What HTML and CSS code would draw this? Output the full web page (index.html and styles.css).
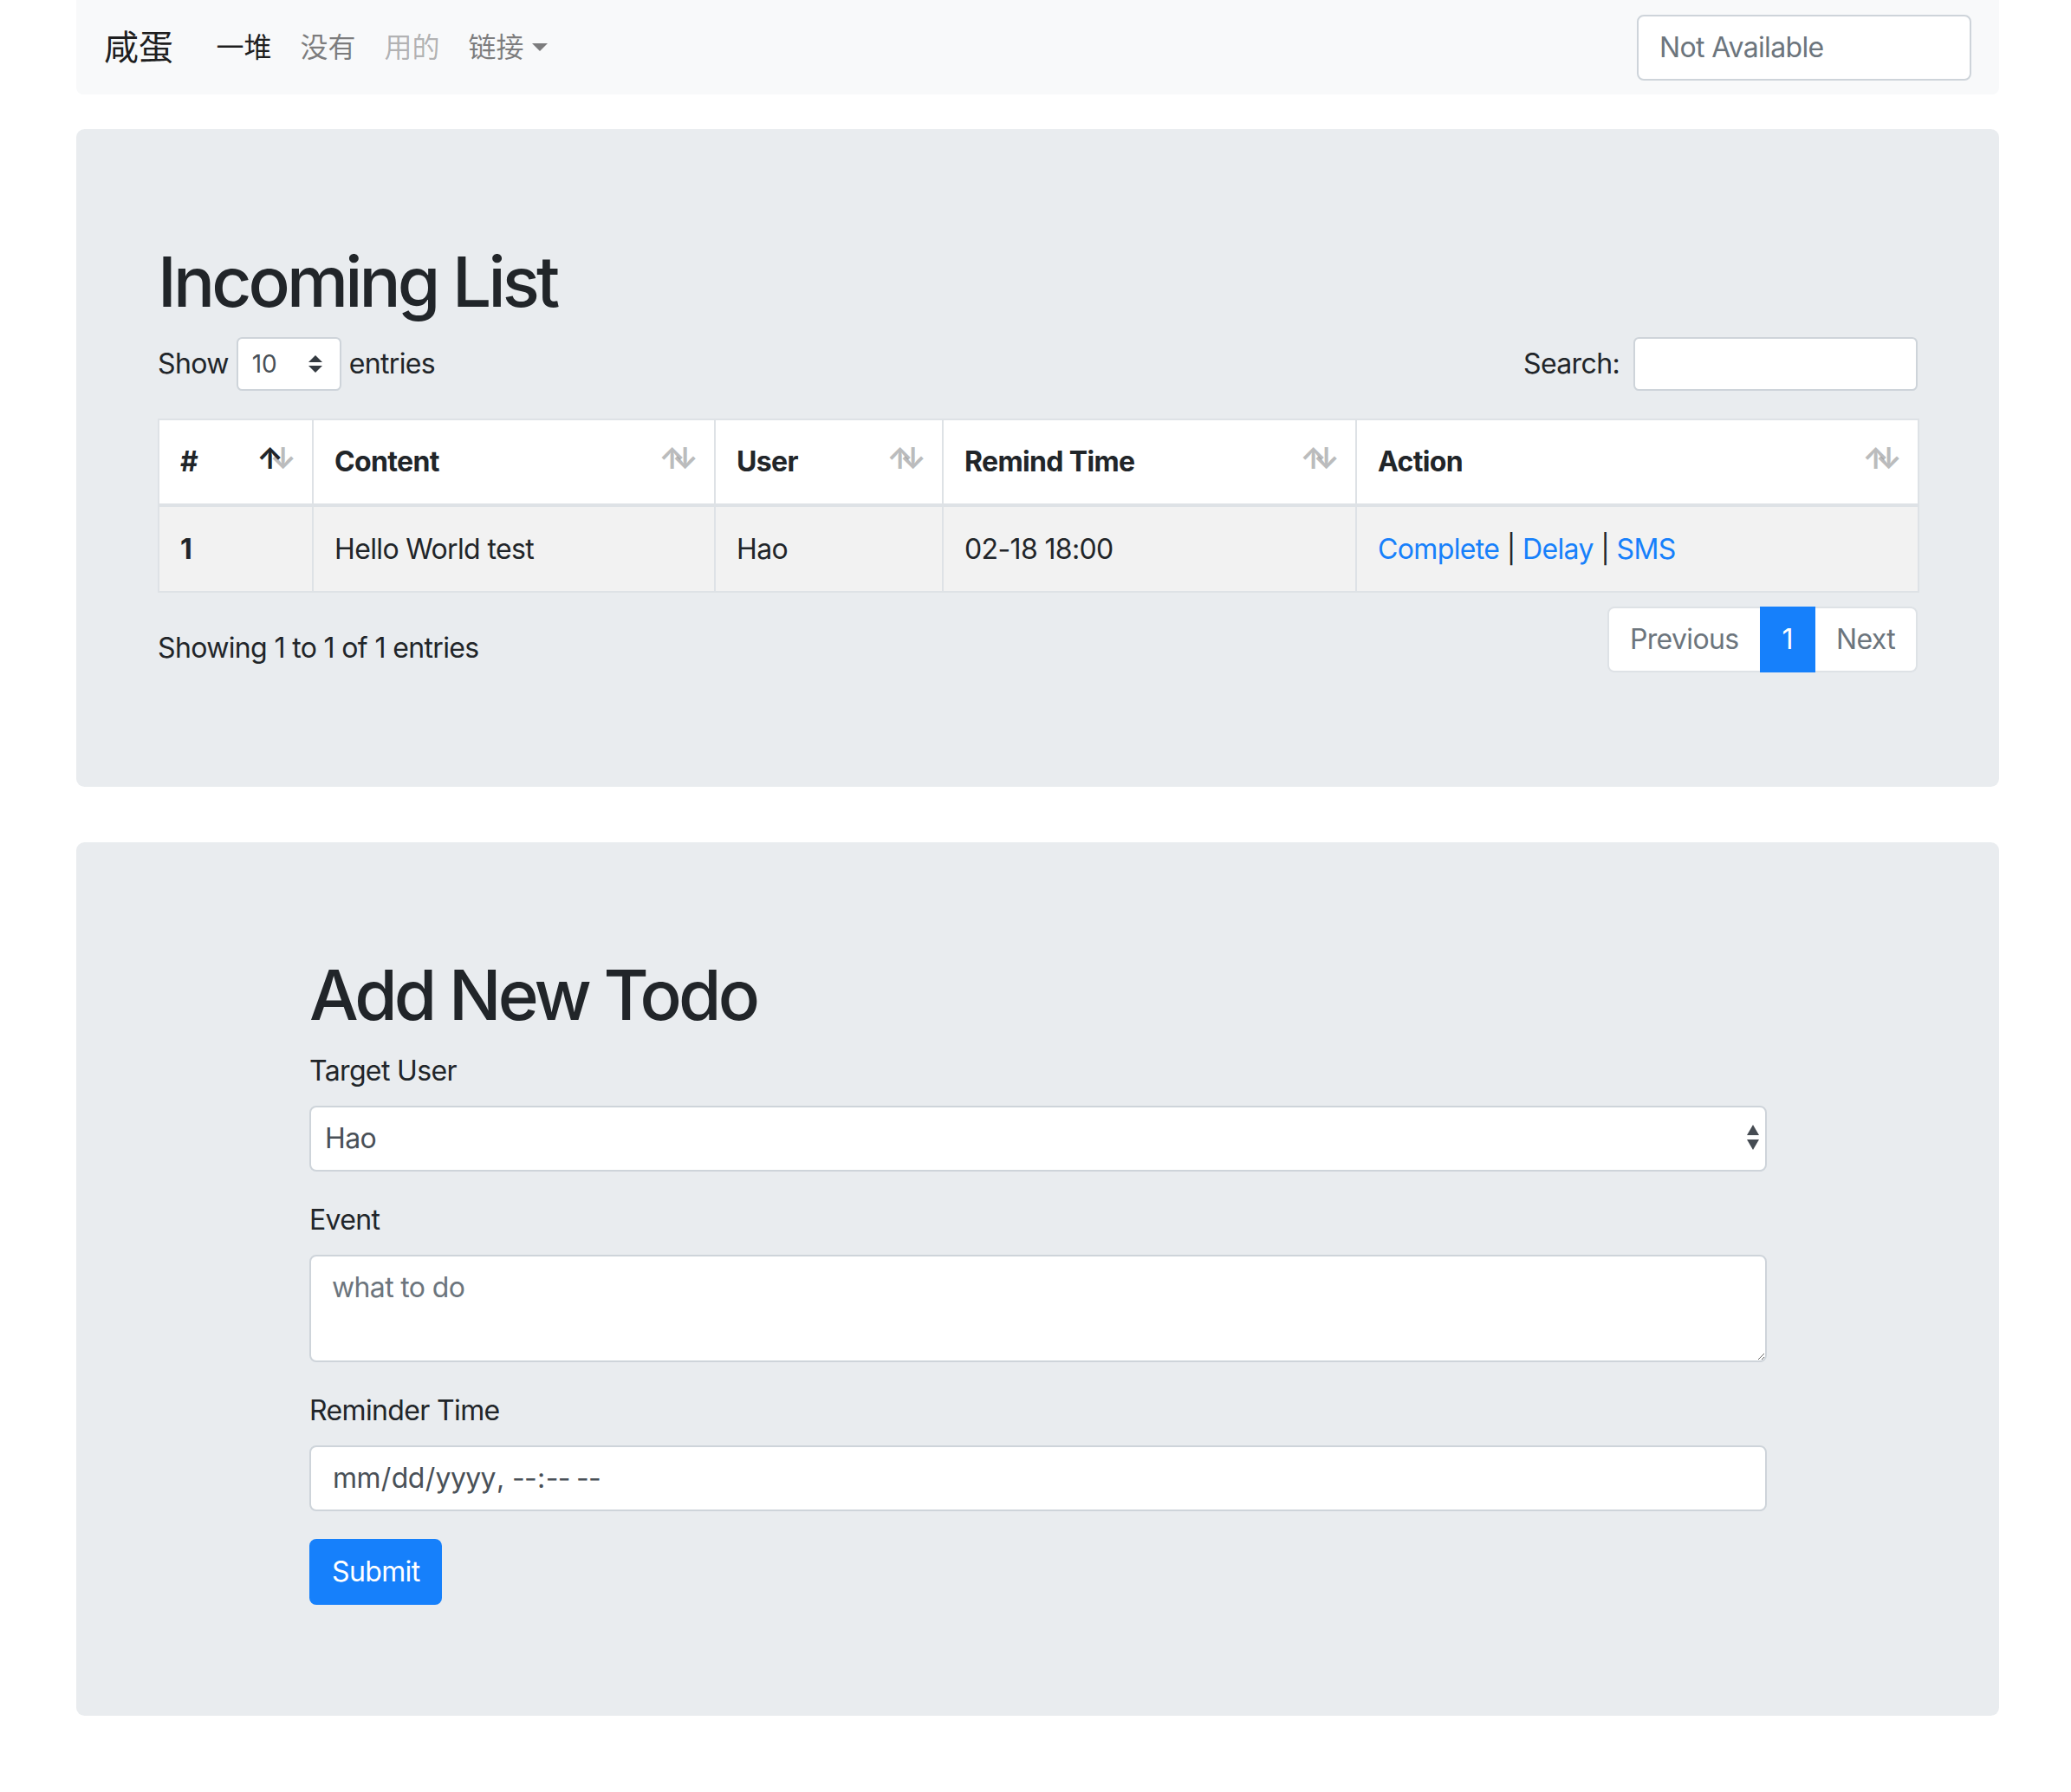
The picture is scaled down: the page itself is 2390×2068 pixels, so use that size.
FILE: index.html
```html
<!DOCTYPE html>
<html lang="zh">
<head>
<meta charset="utf-8">
<title>Incoming List</title>
<link rel="stylesheet" href="styles.css">
</head>
<body>
<div class="page">
  <nav class="navbar">
    <a class="brand" href="#">咸蛋</a>
    <ul class="nav">
      <li><a class="nav-link active" href="#">一堆</a></li>
      <li><a class="nav-link" href="#">没有</a></li>
      <li><a class="nav-link disabled" href="#">用的</a></li>
      <li><a class="nav-link dropdown" href="#">链接</a></li>
    </ul>
    <form class="nav-form">
      <input class="nav-input" type="text" placeholder="Not Available">
    </form>
  </nav>

  <section class="jumbotron">
    <h1 class="title">Incoming List</h1>
    <div class="dt-top">
      <label class="dt-length">Show <span class="select-wrap"><select class="select-sm"><option>10</option><option>25</option><option>50</option></select><svg class="sm-arrows" viewBox="0 0 4 5" width="16" height="20"><path d="M2 0L0 2h4zm0 5L0 3h4z" fill="#343a40"/></svg></span> entries</label>
      <label class="dt-search">Search:<input class="search-input" type="search"></label>
    </div>
    <table class="dt-table">
      <thead>
        <tr>
          <th class="c1 sort asc">#</th>
          <th class="c2 sort">Content</th>
          <th class="c3 sort">User</th>
          <th class="c4 sort">Remind Time</th>
          <th class="c5 sort">Action</th>
        </tr>
      </thead>
      <tbody>
        <tr>
          <th class="rowhead">1</th>
          <td>Hello World test</td>
          <td>Hao</td>
          <td>02-18 18:00</td>
          <td><a class="link" href="#">Complete</a> | <a class="link" href="#">Delay</a> | <a class="link" href="#">SMS</a></td>
        </tr>
      </tbody>
    </table>
    <div class="dt-bottom">
      <div class="dt-info">Showing 1 to 1 of 1 entries</div>
      <ul class="pagination">
        <li class="page-item disabled"><a class="page-link first" href="#">Previous</a></li>
        <li class="page-item active"><a class="page-link" href="#">1</a></li>
        <li class="page-item disabled"><a class="page-link last" href="#">Next</a></li>
      </ul>
    </div>
  </section>

  <section class="jumbotron">
    <div class="todo-form">
      <h1 class="title">Add New Todo</h1>
      <form>
        <div class="form-group">
          <label class="form-label" for="user">Target User</label>
          <div class="select-wrap block">
            <select id="user" class="form-control form-select"><option>Hao</option></select>
            <svg class="lg-arrows" viewBox="0 0 14 29" width="14" height="29"><path d="M0 12L7 0L14 12Z M0 17L14 17L7 29Z" fill="#454b52"/></svg>
          </div>
        </div>
        <div class="form-group">
          <label class="form-label" for="event">Event</label>
          <textarea id="event" class="form-control textarea" rows="2" placeholder="what to do"></textarea>
        </div>
        <div class="form-group">
          <label class="form-label" for="time">Reminder Time</label>
          <input id="time" class="form-control date-input" type="datetime-local">
        </div>
        <button class="btn-submit" type="submit">Submit</button>
      </form>
    </div>
  </section>
</div>
</body>
</html>
```

FILE: styles.css
```css
* { box-sizing: border-box; }

html, body {
  margin: 0;
  padding: 0;
  background: #ffffff;
}

body {
  font-family: Inter, "Noto Sans CJK SC", sans-serif;
  font-size: 32px;
  line-height: 48px;
  color: #212529;
  letter-spacing: -0.02em;
}

.page {
  padding: 0 83px 0 88px;
}

/* ---------- navbar ---------- */
.navbar {
  display: flex;
  align-items: center;
  height: 109px;
  padding: 16px 32px;
  background: #f8f9fa;
  border-radius: 0 0 8px 8px;
}

.brand {
  font-size: 40px;
  line-height: 48px;
  color: rgba(0, 0, 0, 0.9);
  text-decoration: none;
  margin-right: 33px;
  letter-spacing: 0;
}

.nav {
  display: flex;
  list-style: none;
  margin: 0;
  padding: 0;
}

.nav-link {
  display: block;
  padding: 14px 16.5px;
  font-size: 32px;
  line-height: 48px;
  color: rgba(0, 0, 0, 0.5);
  text-decoration: none;
  letter-spacing: 0;
}

.nav-link.active { color: rgba(0, 0, 0, 0.9); }
.nav-link.disabled { color: rgba(0, 0, 0, 0.3); }

.nav-link.dropdown::after {
  content: "";
  display: inline-block;
  margin-left: 9px;
  vertical-align: 7px;
  border-top: 9.6px solid;
  border-left: 9.6px solid transparent;
  border-right: 9.6px solid transparent;
}

.nav-form {
  margin-left: auto;
}

.nav-input {
  width: 386px;
  height: 76px;
  padding: 12px 24px;
  font-family: inherit;
  font-size: 32px;
  letter-spacing: -0.02em;
  color: #495057;
  background: #fff;
  border: 2px solid #ced4da;
  border-radius: 8px;
  outline: none;
}

.nav-input::placeholder,
.form-control::placeholder { color: #6c757d; opacity: 1; }

/* ---------- jumbotron ---------- */
.jumbotron {
  background: #e9ecef;
  border-radius: 9.6px;
  padding: 128px 94px;
  margin-top: 40px;
}

.jumbotron + .jumbotron {
  margin-top: 64px;
}

.title {
  margin: 0 0 16px;
  font-size: 80px;
  line-height: 96px;
  font-weight: 500;
  letter-spacing: -0.048em;
}

/* ---------- datatable top ---------- */
.dt-top {
  display: flex;
  justify-content: space-between;
  align-items: center;
  height: 62px;
}

.dt-length, .dt-search {
  display: flex;
  align-items: center;
  white-space: nowrap;
}

.select-wrap {
  position: relative;
  display: inline-block;
  margin: 0 9px;
}

.select-wrap.block {
  display: block;
  margin: 0;
}

.select-sm {
  appearance: none;
  -webkit-appearance: none;
  width: 121px;
  height: 62px;
  padding: 8px 16px;
  font-family: inherit;
  font-size: 28px;
  color: #495057;
  background: #fff;
  border: 2px solid #ced4da;
  border-radius: 6.4px;
  outline: none;
  display: block;
}

.sm-arrows {
  position: absolute;
  right: 22px;
  top: 21px;
  pointer-events: none;
}

.search-input {
  width: 328px;
  height: 62px;
  margin-left: 16px;
  padding: 8px 16px;
  font-family: inherit;
  font-size: 28px;
  color: #495057;
  background: #fff;
  border: 2px solid #ced4da;
  border-radius: 6.4px;
  outline: none;
}

/* ---------- table ---------- */
.dt-table {
  width: 100%;
  table-layout: fixed;
  border-collapse: collapse;
  margin: 32px 0 12px;
  background: #fff;
}

.dt-table th,
.dt-table td {
  border: 2px solid #dee2e6;
  padding: 25px 24px 24px;
  text-align: left;
  vertical-align: top;
  font-size: 32px;
  line-height: 48px;
}

.dt-table thead th {
  position: relative;
  vertical-align: bottom;
  border-bottom-width: 4px;
  font-weight: 700;
  padding: 24px 60px 24px 24px;
}

.dt-table tbody tr { background: #f2f2f2; }

.dt-table .rowhead { font-weight: 700; }

.c1 { width: 178px; }
.c2 { width: 464px; }
.c3 { width: 263px; }
.c4 { width: 477px; }
.c5 { width: 649px; }

.sort::before,
.sort::after {
  position: absolute;
  bottom: 28px;
  display: block;
  opacity: 0.3;
  font-family: Inter, "DejaVu Sans", sans-serif;
  font-weight: 700;
  font-size: 34px;
  line-height: 48px;
  letter-spacing: 0;
}

.sort::before { content: "\2191"; right: 33px; }
.sort::after { content: "\2193"; right: 18px; }
.sort.asc::before { opacity: 1; }

.link {
  color: #1680fb;
  text-decoration: none;
}

/* ---------- datatable bottom ---------- */
.dt-bottom {
  display: flex;
  justify-content: space-between;
  align-items: flex-start;
}

.dt-info {
  padding-top: 28px;
  white-space: nowrap;
}

.pagination {
  display: flex;
  list-style: none;
  margin: 4px 0;
  padding: 0;
}

.page-link {
  display: block;
  padding: 16px 24px;
  margin-left: -2px;
  font-size: 32px;
  line-height: 40px;
  color: #1680fb;
  background: #fff;
  border: 2px solid #dee2e6;
  text-decoration: none;
}

.page-link.first {
  margin-left: 0;
  border-radius: 8px 0 0 8px;
}

.page-link.last {
  border-radius: 0 8px 8px 0;
}

.page-item.disabled .page-link { color: #6c757d; }

.page-item.active .page-link {
  color: #fff;
  background: #1680fb;
  border-color: #1680fb;
  position: relative;
}

/* ---------- form ---------- */
.todo-form {
  margin: 0 174px 0 175px;
}

.form-group {
  margin-bottom: 32px;
}

.form-label {
  display: inline-block;
  margin-bottom: 16px;
}

.form-control {
  display: block;
  width: 100%;
  height: 76px;
  padding: 12px 24px;
  font-family: inherit;
  font-size: 32px;
  line-height: 48px;
  letter-spacing: -0.02em;
  color: #495057;
  background: #fff;
  border: 2px solid #ced4da;
  border-radius: 8px;
  outline: none;
}

.form-select {
  appearance: none;
  -webkit-appearance: none;
  padding-left: 16px;
}

.lg-arrows {
  position: absolute;
  right: 9px;
  top: 22px;
  pointer-events: none;
}

.textarea {
  height: 124px;
  resize: vertical;
}

.date-input::-webkit-calendar-picker-indicator {
  display: none;
}

.btn-submit {
  display: inline-block;
  height: 76px;
  padding: 12px 24px;
  font-family: inherit;
  font-size: 32px;
  line-height: 48px;
  letter-spacing: -0.02em;
  color: #fff;
  background: #1680fb;
  border: 2px solid #1680fb;
  border-radius: 8px;
}
```
